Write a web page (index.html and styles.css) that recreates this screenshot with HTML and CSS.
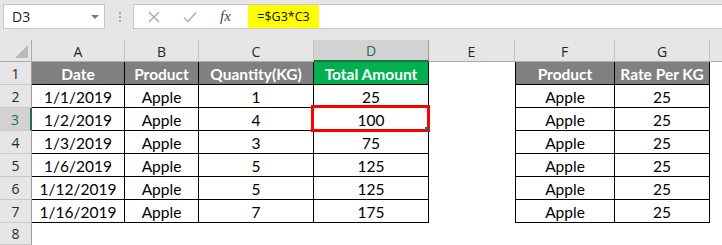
FILE: index.html
```html
<!DOCTYPE html>
<html lang="en">
<head>
<meta charset="UTF-8">
<title>Sheet</title>
<link rel="stylesheet" href="styles.css">
</head>
<body>

<div class="formula-bar">
  <div class="name-box">
    <span>D3</span>
    <span class="drop"></span>
  </div>
  <div class="grip"><i></i><i></i><i></i></div>
  <div class="formula-box">
    <div class="fx-tools">
      <svg width="12" height="12" viewBox="0 0 12 12"><path d="M1 1 L11 11 M11 1 L1 11" stroke="#a6a6a6" stroke-width="1.3" fill="none"/></svg>
      <svg width="14" height="12" viewBox="0 0 14 12"><path d="M1 6.5 L5 10.5 L13 1.5" stroke="#b4b4b4" stroke-width="1.6" fill="none"/></svg>
      <span class="fx">fx</span>
    </div>
    <div class="formula"><span class="hl">=$G3*C3</span></div>
  </div>
</div>

<div class="sheet">
  <!-- column headers -->
  <div class="corner"><span class="tri"></span></div>
  <div class="ch">A</div>
  <div class="ch">B</div>
  <div class="ch">C</div>
  <div class="ch sel">D</div>
  <div class="ch">E</div>
  <div class="ch">F</div>
  <div class="ch">G</div>
  <div class="ch last"></div>

  <!-- row 1 -->
  <div class="rh">1</div>
  <div class="t th">Date</div>
  <div class="t th">Product</div>
  <div class="t th">Quantity(KG)</div>
  <div class="t tg">Total Amount</div>
  <div class="c"></div>
  <div class="t th fl">Product</div>
  <div class="t th">Rate Per KG</div>
  <div class="c"></div>

  <!-- row 2 -->
  <div class="rh">2</div>
  <div class="t">1/1/2019</div>
  <div class="t">Apple</div>
  <div class="t">1</div>
  <div class="t">25</div>
  <div class="c"></div>
  <div class="t fl">Apple</div>
  <div class="t">25</div>
  <div class="c"></div>

  <!-- row 3 -->
  <div class="rh sel">3</div>
  <div class="t">1/2/2019</div>
  <div class="t">Apple</div>
  <div class="t">4</div>
  <div class="t active">100<span class="mark"><span class="handle"></span></span></div>
  <div class="c"></div>
  <div class="t fl">Apple</div>
  <div class="t">25</div>
  <div class="c"></div>

  <!-- row 4 -->
  <div class="rh">4</div>
  <div class="t">1/3/2019</div>
  <div class="t">Apple</div>
  <div class="t">3</div>
  <div class="t">75</div>
  <div class="c"></div>
  <div class="t fl">Apple</div>
  <div class="t">25</div>
  <div class="c"></div>

  <!-- row 5 -->
  <div class="rh">5</div>
  <div class="t">1/6/2019</div>
  <div class="t">Apple</div>
  <div class="t">5</div>
  <div class="t">125</div>
  <div class="c"></div>
  <div class="t fl">Apple</div>
  <div class="t">25</div>
  <div class="c"></div>

  <!-- row 6 -->
  <div class="rh">6</div>
  <div class="t">1/12/2019</div>
  <div class="t">Apple</div>
  <div class="t">5</div>
  <div class="t">125</div>
  <div class="c"></div>
  <div class="t fl">Apple</div>
  <div class="t">25</div>
  <div class="c"></div>

  <!-- row 7 -->
  <div class="rh">7</div>
  <div class="t">1/16/2019</div>
  <div class="t">Apple</div>
  <div class="t">7</div>
  <div class="t">175</div>
  <div class="c"></div>
  <div class="t fl">Apple</div>
  <div class="t">25</div>
  <div class="c"></div>

  <!-- row 8 -->
  <div class="rh">8</div>
  <div class="c"></div>
  <div class="c"></div>
  <div class="c"></div>
  <div class="c"></div>
  <div class="c"></div>
  <div class="c"></div>
  <div class="c"></div>
  <div class="c"></div>
</div>

</body>
</html>
```

FILE: styles.css
```css
* {
  box-sizing: border-box;
}

body {
  margin: 0;
  background-color: #ffffff;
  font-family: 'Open Sans', 'Noto Sans', sans-serif;
  overflow: hidden;
}

/* formula bar */
.formula-bar {
  display: flex;
  align-items: flex-start;
  height: 40px;
  padding-top: 4px;
  background-color: #e6e6e6;
}

.name-box {
  display: flex;
  align-items: center;
  justify-content: space-between;
  width: 102px;
  height: 25px;
  margin-left: 3px;
  padding: 0 5px 0 8px;
  background-color: #fff;
  border: 1px solid #c6c6c6;
  font-size: 14px;
  color: #222;
}

.drop {
  width: 0;
  height: 0;
  border-left: 4px solid transparent;
  border-right: 4px solid transparent;
  border-top: 4px solid #777;
}

.grip {
  display: flex;
  flex-direction: column;
  gap: 2px;
  width: 28px;
  padding: 8px 0 0 14px;
}

.grip i {
  display: block;
  width: 2px;
  height: 2px;
  background-color: #a5a5a5;
}

.formula-box {
  display: flex;
  flex: 1;
  height: 25px;
  background-color: #fff;
  border: 1px solid #c6c6c6;
  border-right: none;
}

.fx-tools {
  display: flex;
  align-items: center;
  gap: 23px;
  width: 114px;
  padding-left: 14px;
}

.fx {
  font-family: 'Liberation Serif', serif;
  font-style: italic;
  font-size: 15px;
  color: #444;
}

.formula {
  display: flex;
}

.hl {
  display: flex;
  align-items: center;
  justify-content: center;
  width: 71px;
  background-color: #ffff00;
  font-size: 12.5px;
  color: #111;
}

/* grid */
.sheet {
  display: grid;
  grid-template-columns: 32px 93px 74px 115px 115px 86px 100px 95px 1fr;
  grid-template-rows: 22px repeat(7, 23px) 22px;
  font-family: 'Lato', 'Liberation Sans', sans-serif;
  font-size: 15.5px;
  color: #000;
}

.corner {
  position: relative;
  background-color: #e6e6e6;
  border-right: 1px solid #ababab;
  border-bottom: 1px solid #ababab;
}

.tri {
  position: absolute;
  right: 3px;
  bottom: 3px;
  width: 0;
  height: 0;
  border-left: 13px solid transparent;
  border-bottom: 13px solid #b9b9b9;
}

.ch {
  display: flex;
  align-items: center;
  justify-content: center;
  padding-top: 1px;
  background-color: #e6e6e6;
  border-right: 1px solid #c0c0c0;
  border-bottom: 1px solid #ababab;
  font-family: 'Open Sans', 'Noto Sans', sans-serif;
  font-size: 14px;
  color: #262626;
}

.ch.sel {
  background-color: #d2d2d2;
  color: #217346;
  border-right-color: #9b9b9b;
  border-bottom: 2px solid #217346;
}

.ch.last {
  border-right: none;
}

.rh {
  display: flex;
  align-items: center;
  justify-content: center;
  background-color: #e6e6e6;
  border-right: 1px solid #9b9b9b;
  border-bottom: 1px solid #c8c8c8;
  font-family: 'Open Sans', 'Noto Sans', sans-serif;
  font-size: 14px;
  color: #262626;
}

.rh.sel {
  background-color: #d2d2d2;
  color: #217346;
  border-right: 2px solid #217346;
}

.c {
  background-color: #fff;
}

.t {
  display: flex;
  align-items: center;
  justify-content: center;
  padding-top: 1px;
  background-color: #fff;
  border-right: 1px solid #000;
  border-bottom: 1px solid #000;
}

.fl {
  border-left: 1px solid #000;
}

.th {
  background-color: #808080;
  color: #fff;
  font-weight: bold;
}

.tg {
  background-color: #00b050;
  color: #fff;
  font-weight: bold;
}

.active {
  position: relative;
}

.mark {
  position: absolute;
  left: -3px;
  top: -3px;
  width: 119px;
  height: 27px;
  border: 3px solid #ff0000;
}

.handle {
  position: absolute;
  right: -2px;
  bottom: -2px;
  width: 4px;
  height: 4px;
  background-color: #217346;
}
```
